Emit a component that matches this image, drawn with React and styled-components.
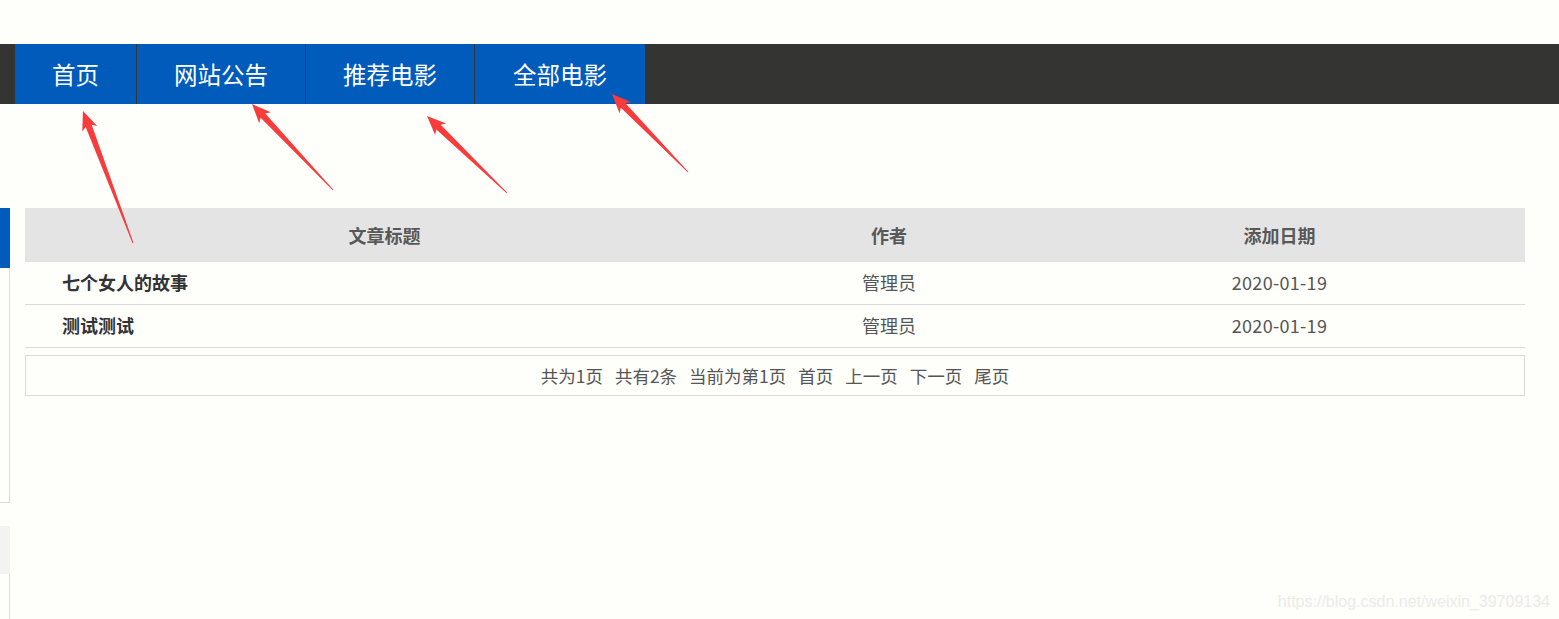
import React from 'react';
import styled, { createGlobalStyle } from 'styled-components';

const GlobalStyle = createGlobalStyle`
  html, body {
    margin: 0;
    padding: 0;
    background: #fefefb;
    font-family: "Noto Sans CJK SC", "Microsoft YaHei", sans-serif;
  }
`;

// Página inteira
const Page = styled.div`
  position: relative;
  width: 1559px;
  height: 619px;
  overflow: hidden;
  background: #fefefb;
`;

const TopSpace = styled.div`
  height: 44px;
`;

const NavBar = styled.nav`
  height: 60px;
  background: #343432;
  display: flex;
  padding-left: 15px;
`;

const NavItem = styled.a`
  display: flex;
  align-items: center;
  padding: 0 ${(p) => p.$pad || 37}px;
  margin-right: 1px;
  background: #005bbb;
  color: #fff;
  font-size: 23.5px;
  text-decoration: none;
  cursor: pointer;
`;

const Main = styled.div`
  display: flex;
  gap: 15px;
  padding-top: 104px;
`;

// Barra lateral (cortada na borda esquerda)
const Sidebar = styled.div`
  width: 10px;
  display: flex;
  flex-direction: column;
`;

const SideTab = styled.div`
  height: 60px;
  background: #005bbb;
`;

const SidePanel = styled.div`
  height: ${(p) => p.$h}px;
  border-right: 1px solid #dcdcda;
  border-bottom: ${(p) => (p.$bottom ? '1px solid #dcdcda' : 'none')};
  margin-bottom: ${(p) => p.$mb || 0}px;
`;

const SideGray = styled.div`
  height: 48px;
  background: #f3f3f1;
`;

const Content = styled.div`
  width: 1500px;
`;

const Table = styled.table`
  width: 100%;
  border-collapse: collapse;
  font-size: 18px;
`;

const Th = styled.th`
  height: 53px;
  padding: 0 0 1px;
  background: #e4e4e4;
  color: #585858;
  font-weight: bold;
  text-align: center;
  width: ${(p) => p.$w}px;
`;

const Td = styled.td`
  height: 39px;
  padding: 0 ${(p) => (p.$left ? '37px' : '0')} 3px;
  border-bottom: 1px solid #dadada;
  color: ${(p) => (p.$bold ? '#333' : '#555')};
  font-weight: ${(p) => (p.$bold ? 'bold' : 'normal')};
  text-align: ${(p) => (p.$left ? 'left' : 'center')};
  letter-spacing: ${(p) => (p.$num ? '0.3px' : '0')};
`;

const Pager = styled.div`
  margin-top: 7px;
  height: 41px;
  padding-bottom: 1px;
  box-sizing: border-box;
  border: 1px solid #dadada;
  display: flex;
  align-items: center;
  justify-content: center;
  gap: 12px;
  color: #555;
  font-size: 17.5px;
`;

const PagerLink = styled.span`
  cursor: pointer;
`;

// Camada de anotações (setas vermelhas)
const Annotations = styled.svg`
  position: absolute;
  left: 0;
  top: 0;
  pointer-events: none;
`;

const Watermark = styled.div`
  position: absolute;
  right: 9px;
  bottom: 8px;
  color: #ebebe9;
  font-family: "Liberation Sans", Arial, sans-serif;
  font-size: 16px;
`;

function Arrow({ tip, tail }) {
  const dx = tail[0] - tip[0];
  const dy = tail[1] - tip[1];
  const len = Math.sqrt(dx * dx + dy * dy);
  const angle = (Math.atan2(dy, dx) * 180) / Math.PI;
  const pts = [
    [0, 0],
    [19, 8],
    [16, 3.2],
    [len, 0.5],
    [len, -0.5],
    [16, -3.2],
    [19, -8],
  ]
    .map((p) => p.join(','))
    .join(' ');
  return (
    <polygon
      points={pts}
      fill="#f83c3c"
      transform={`translate(${tip[0]} ${tip[1]}) rotate(${angle})`}
    />
  );
}

const navItems = [
  { label: '首页' },
  { label: '网站公告' },
  { label: '推荐电影' },
  { label: '全部电影', pad: 38 },
];

const rows = [
  { title: '七个女人的故事', author: '管理员', date: '2020-01-19' },
  { title: '测试测试', author: '管理员', date: '2020-01-19' },
];

const arrows = [
  { tip: [83, 111], tail: [133, 243] },
  { tip: [252, 104], tail: [333, 190] },
  { tip: [427, 116], tail: [507, 193] },
  { tip: [612, 94], tail: [688, 172] },
];

export default function App() {
  return (
    <Page>
      <GlobalStyle />
      <TopSpace />
      <NavBar>
        {navItems.map((item) => (
          <NavItem key={item.label} $pad={item.pad}>{item.label}</NavItem>
        ))}
      </NavBar>

      <Main>
        <Sidebar>
          <SideTab />
          <SidePanel $h={234} $bottom $mb={23} />
          <SideGray />
          <SidePanel $h={60} />
        </Sidebar>

        <Content>
          <Table>
            <thead>
              <tr>
                <Th $w={719}>文章标题</Th>
                <Th $w={290}>作者</Th>
                <Th $w={491}>添加日期</Th>
              </tr>
            </thead>
            <tbody>
              {rows.map((row) => (
                <tr key={row.title}>
                  <Td $left $bold>{row.title}</Td>
                  <Td>{row.author}</Td>
                  <Td $num>{row.date}</Td>
                </tr>
              ))}
            </tbody>
          </Table>
          <Pager>
            <span>共为1页</span>
            <span>共有2条</span>
            <span>当前为第1页</span>
            <PagerLink>首页</PagerLink>
            <PagerLink>上一页</PagerLink>
            <PagerLink>下一页</PagerLink>
            <PagerLink>尾页</PagerLink>
          </Pager>
        </Content>
      </Main>

      <Annotations width="1559" height="619">
        {arrows.map((a, i) => (
          <Arrow key={i} tip={a.tip} tail={a.tail} />
        ))}
      </Annotations>

      <Watermark>https://blog.csdn.net/weixin_39709134</Watermark>
    </Page>
  );
}
